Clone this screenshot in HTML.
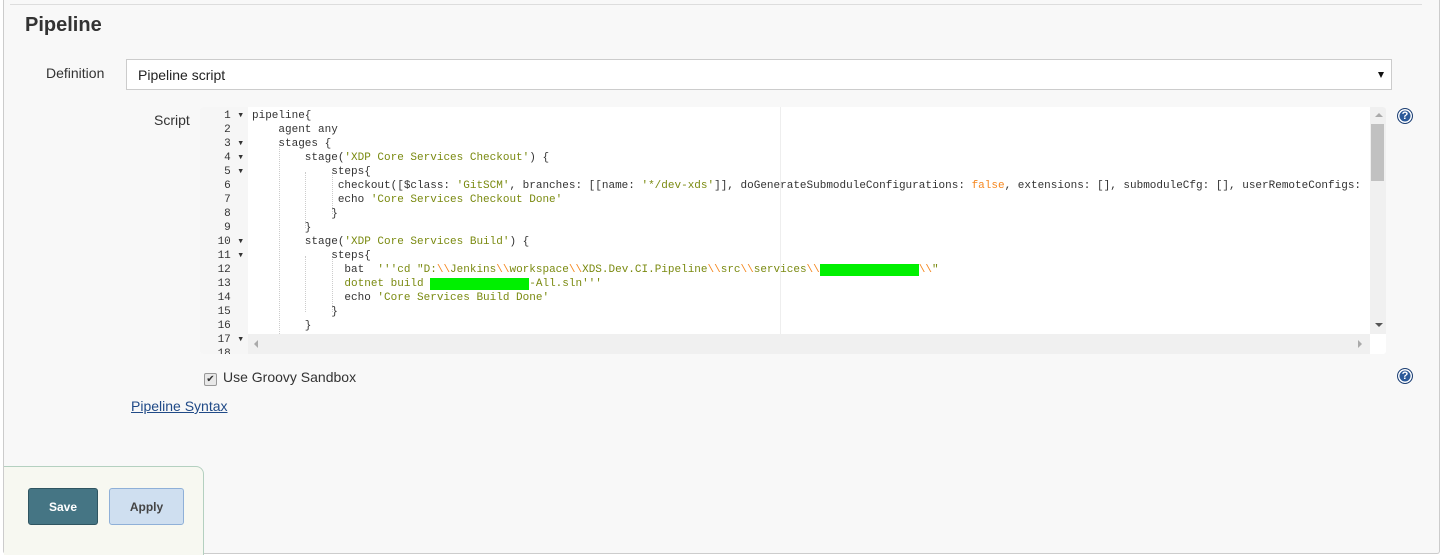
<!DOCTYPE html>
<html><head><meta charset="utf-8"><style>
body{margin:0;width:1442px;height:556px;background:#fff;font-family:"Liberation Sans",Arial,sans-serif;overflow:hidden;position:relative}
.panel{position:absolute;left:3px;top:0;width:1435px;height:553px;background:#f8f8f8;border-left:1px solid #ccc;border-right:1px solid #ccc;border-bottom:1px solid #ccc;border-radius:0 0 3px 3px}
.topline{position:absolute;left:10px;top:4px;width:1412px;height:1px;background:#ddd}
h1{position:absolute;left:25px;top:14px;margin:0;font-size:20px;font-weight:bold;color:#333}
.lbl{position:absolute;font-size:14px;color:#333}
.sel{position:absolute;left:126px;top:59px;width:1266px;height:31px;background:#fff;border:1px solid #ccc;box-sizing:border-box}
.sel span{position:absolute;left:11px;top:7px;font-size:14px;color:#222}
.sel i{position:absolute;right:7px;top:12px;width:0;height:0;border-left:3.5px solid transparent;border-right:3.5px solid transparent;border-top:6px solid #111}
.ed{position:absolute;left:200px;top:107px;width:1186px;height:247px;background:#fff;overflow:hidden;border-radius:3px}
.gut{position:absolute;left:0;top:0;width:48px;height:247px;background:#f6f6f6}
.code{position:absolute;left:0;top:2px;font-family:"Liberation Mono",monospace;font-size:11px;line-height:14px;white-space:pre;color:#333}
.s{color:#7a8a10}.e{color:#f5871f}.k{color:#f5871f}
.hs{position:absolute;left:48px;top:227px;width:1122px;height:20px;background:#f0f0f0}
.vs{position:absolute;left:1170px;top:0;width:16px;height:227px;background:#f0f0f0}
.thumb{position:absolute;left:1171px;top:17px;width:13px;height:57px;background:#c1c1c1}
.pm{position:absolute;left:580px;top:0;width:1px;height:227px;background:#eee}
.guide{position:absolute;border-left:1px dotted #ccc}
.help{position:absolute;width:14px;height:14px;border-radius:50%;background:#2b5a9a;border:1px solid #1d3f73;color:#fff;font-size:11px;font-weight:bold;text-align:center;line-height:14px;box-shadow:inset 0 0 0 1.5px #fff}
.btn{position:absolute;top:488px;height:37px;border-radius:3px;font-size:12px;font-weight:bold;text-align:center;line-height:36px;box-sizing:border-box}
</style></head><body>
<div class="panel"></div>
<div class="topline"></div>
<h1>Pipeline</h1>
<div class="lbl" style="left:46px;top:65px">Definition</div>
<div class="sel"><span>Pipeline script</span><i></i></div>
<div class="lbl" style="left:154px;top:112px">Script</div>
<div class="ed">
<div class="gut"></div>
<div class="pm"></div>
<div class="guide" style="left:79px;top:37px;height:200px"></div>
<div class="guide" style="left:105px;top:65px;height:56px"></div>
<div class="guide" style="left:105px;top:149px;height:56px"></div>
<div class="guide" style="left:132px;top:65px;height:42px"></div>
<div class="guide" style="left:132px;top:149px;height:56px"></div>
<div class="vs"></div><div class="thumb"></div>
<div class="hs"></div>
<div style="position:absolute;left:1171px;top:227px;width:15px;height:20px;background:#fff"></div>
<div style="position:absolute;left:54px;top:233px;border-right:4px solid #aaa;border-top:4px solid transparent;border-bottom:4px solid transparent"></div>
<div style="position:absolute;left:1158px;top:233px;border-left:4px solid #aaa;border-top:4px solid transparent;border-bottom:4px solid transparent"></div>
<div style="position:absolute;left:1175px;top:6px;border-bottom:4px solid #aaa;border-left:4px solid transparent;border-right:4px solid transparent"></div>
<div style="position:absolute;left:1175px;top:216px;border-top:4px solid #555;border-left:4px solid transparent;border-right:4px solid transparent"></div>
</div>
<div style="position:absolute;left:200px;top:107px;width:48px;height:247px;overflow:hidden;font-family:'Liberation Mono',monospace;font-size:11px;line-height:14px;color:#333;text-align:right">
<div style="position:absolute;right:4px;top:2px;white-space:pre;background:#f6f6f6">  1 ▾
  2  
  3 ▾
  4 ▾
  5 ▾
  6  
  7  
  8  
  9  
 10 ▾
 11 ▾
 12  
 13  
 14  
 15  
 16  
 17 ▾
 18  </div></div>
<div style="position:absolute;left:252px;top:107px;width:1118px;height:227px;overflow:hidden">
<div class="code">pipeline{
    agent any
    stages {
        stage(<span class="s">'XDP Core Services Checkout'</span>) {
            steps{
             checkout([$class: <span class="s">'GitSCM'</span>, branches: [[name: <span class="s">'*/dev-xds'</span>]], doGenerateSubmoduleConfigurations: <span class="k">false</span>, extensions: [], submoduleCfg: [], userRemoteConfigs: 
             echo <span class="s">'Core Services Checkout Done'</span>
            }
        }
        stage(<span class="s">'XDP Core Services Build'</span>) {
            steps{
              bat  <span class="s">'''cd "D:<span class="e">\\</span>Jenkins<span class="e">\\</span>workspace<span class="e">\\</span>XDS.Dev.CI.Pipeline<span class="e">\\</span>src<span class="e">\\</span>services<span class="e">\\</span><span style="background:#00f000;color:#00f000">XXXXXXXXXXXXXXX</span><span class="e">\\</span>"</span>
<span class="s">              dotnet build <span style="background:#00f000;color:#00f000">XXXXXXXXXXXXXXX</span>-All.sln'''</span>
              echo <span class="s">'Core Services Build Done'</span>
            }
        }
</div></div>
<div class="help" style="left:1397px;top:108px">?</div>
<div style="position:absolute;left:204px;top:373px;width:11px;height:11px;border:1px solid #999;border-radius:2px;background:#e8e8e8;font-size:10px;line-height:11px;text-align:center;color:#333">✔</div>
<div class="lbl" style="left:223px;top:369px">Use Groovy Sandbox</div>
<div class="help" style="left:1397px;top:368px">?</div>
<div class="lbl" style="left:131px;top:398px;color:#204a87;text-decoration:underline">Pipeline Syntax</div>
<div style="position:absolute;left:4px;top:466px;width:199px;height:88px;background:#f7f8f1;border:1px solid #b4d0c0;border-left:none;border-bottom:none;border-radius:0 8px 0 0"></div>
<div class="btn" style="left:28px;width:70px;background:#457584;border:1px solid #2f5561;color:#fff">Save</div>
<div class="btn" style="left:109px;width:75px;background:#cfdff0;border:1px solid #8fb0d8;color:#444">Apply</div>
</body></html>
